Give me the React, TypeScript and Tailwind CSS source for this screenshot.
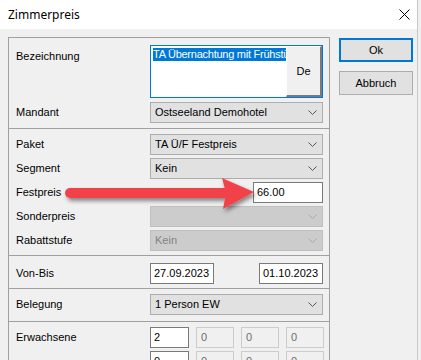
import React from "react";

const Chevron = ({ disabled }: { disabled?: boolean }) => (
  <svg width="9" height="6" viewBox="0 0 9 6" className="mr-[5px] shrink-0">
    <path d="M0.5 0.5 L4.5 4.5 L8.5 0.5" fill="none" stroke={disabled ? "#a8a8a8" : "#555555"} strokeWidth="1" />
  </svg>
);

const Select = ({ text, disabled }: { text?: string; disabled?: boolean }) => (
  <div
    className={
      "h-[21px] flex-1 min-w-0 flex items-center justify-between border pl-[4px] " +
      (disabled ? "bg-[#cccccc] border-[#bfbfbf] text-[#838383]" : "bg-[#e1e1e1] border-[#adadad] text-black")
    }
  >
    <span className="whitespace-nowrap">{text}</span>
    <Chevron disabled={disabled} />
  </div>
);

const Row = ({ label, children, className = "" }: { label: string; children: React.ReactNode; className?: string }) => (
  <div className={"flex items-center h-[21px] " + className}>
    <div className="w-[134px] shrink-0">{label}</div>
    <div className="flex-1 min-w-0 flex items-center h-full">{children}</div>
  </div>
);

const Input = ({ text, className = "" }: { text: string; className?: string }) => (
  <div className={"h-[21px] bg-white border border-[#7a7a7a] flex items-center pl-[3px] " + className}>{text}</div>
);

const DisInput = ({ text }: { text: string }) => (
  <div className="h-[21px] w-[38px] bg-[#f0f0f0] border border-[#cccccc] flex items-center pl-[4px] text-[#6d6d6d]">{text}</div>
);

export default function App() {
  return (
    <div className="relative w-[421px] h-[360px] overflow-hidden bg-[#f0f0f0] text-[11px] leading-[13px] text-black font-['Liberation_Sans',Arial,sans-serif]">
      <div className="h-[29px] bg-white flex items-center justify-between pl-[8px] pr-[11px]">
        <span className="text-[12px] font-['Noto_Sans',sans-serif] -mt-[1px]">Zimmerpreis</span>
        <svg width="11" height="11" viewBox="0 0 11 11">
          <path d="M0.5 0.5 L10.5 10.5 M10.5 0.5 L0.5 10.5" stroke="#000" strokeWidth="1" />
        </svg>
      </div>
      <div className="flex pt-[8px] pl-[8px]">
        <div className="w-[322px] shrink-0 border border-[#a0a0a0] pl-[7px] pr-[6px]">
          {/* Section 1 */}
          <div className="pt-[7px] pb-[5px] flex flex-col gap-[4px]">
            <div className="flex">
              <div className="w-[134px] shrink-0 pt-[5px]">Bezeichnung</div>
              <div className="flex-1 min-w-0 h-[53px] border border-[#0078d7] bg-white flex">
                <div className="flex-1 min-w-0 overflow-hidden pl-[2px] pt-[2px]">
                  <span className="bg-[#0078d7] text-white whitespace-nowrap inline-block tracking-[-0.25px]">TA Übernachtung mit Frühstück</span>
                </div>
                <div className="w-[36px] shrink-0 h-[51px] bg-[#f0f0f0] border-t border-l border-t-white border-l-white border-r-2 border-b-2 border-r-[#7a7a7a] border-b-[#7a7a7a] flex items-center justify-center">
                  De
                </div>
              </div>
            </div>
            <Row label="Mandant">
              <Select text="Ostseeland Demohotel" />
            </Row>
          </div>
          {/* Section 2 */}
          <div className="border-t border-[#a0a0a0] -ml-[7px] pl-[7px] -mr-[6px] pr-[6px] pt-[5px] pb-[4px] flex flex-col gap-[3px]">
            <Row label="Paket">
              <Select text="TA Ü/F Festpreis" />
            </Row>
            <Row label="Segment">
              <Select text="Kein" />
            </Row>
            <Row label="Festpreis">
              <div className="flex-1 flex justify-end">
                <Input text="66.00" className="w-[70px]" />
              </div>
            </Row>
            <Row label="Sonderpreis">
              <Select disabled />
            </Row>
            <Row label="Rabattstufe">
              <Select text="Kein" disabled />
            </Row>
          </div>
          {/* Section 3 */}
          <div className="border-t border-[#a0a0a0] -ml-[7px] pl-[7px] -mr-[6px] pr-[6px] pt-[7px] pb-[4px]">
            <Row label="Von-Bis">
              <div className="flex-1 flex justify-between">
                <Input text="27.09.2023" className="w-[64px]" />
                <Input text="01.10.2023" className="w-[64px]" />
              </div>
            </Row>
          </div>
          {/* Section 4 */}
          <div className="border-t border-[#a0a0a0] -ml-[7px] pl-[7px] -mr-[6px] pr-[6px] pt-[5px] pb-[6px]">
            <Row label="Belegung">
              <Select text="1 Person EW" />
            </Row>
          </div>
          {/* Section 5 */}
          <div className="border-t border-[#a0a0a0] -ml-[7px] pl-[7px] -mr-[6px] pr-[6px] pt-[5px] pb-[6px] flex flex-col gap-[3px]">
            <Row label="Erwachsene">
              <div className="flex gap-[7px]">
                <Input text="2" className="w-[39px]" />
                <DisInput text="0" />
                <DisInput text="0" />
                <DisInput text="0" />
              </div>
            </Row>
            <Row label="">
              <div className="flex gap-[7px]">
                <Input text="0" className="w-[39px]" />
                <DisInput text="0" />
                <DisInput text="0" />
                <DisInput text="0" />
              </div>
            </Row>
          </div>
        </div>
        <div className="ml-[9px] mt-[1px] flex flex-col gap-[9px]">
          <div className="w-[74px] h-[24px] border-2 border-[#0078d7] bg-[#e1e1e1] flex items-center justify-center">Ok</div>
          <div className="w-[74px] h-[24px] border border-[#adadad] bg-[#e1e1e1] flex items-center justify-center">Abbruch</div>
        </div>
      </div>
      <div className="absolute top-0 right-0 w-[4px] h-full bg-[#f0f0f0] border-l border-[#c8c8c8]" />
      <svg className="absolute left-0 top-0 pointer-events-none" width="421" height="360">
        <defs>
          <filter id="sh" x="-20%" y="-50%" width="140%" height="200%">
            <feDropShadow dx="2" dy="3" stdDeviation="2" floodColor="#000" floodOpacity="0.45" />
          </filter>
        </defs>
        <g filter="url(#sh)">
          <line x1="70" y1="193" x2="226" y2="193" stroke="#f2434a" strokeWidth="10" strokeLinecap="round" />
          <path d="M222 178 L254 192 L223 209 L226 193 Z" fill="#f2434a" />
        </g>
      </svg>
    </div>
  );
}
